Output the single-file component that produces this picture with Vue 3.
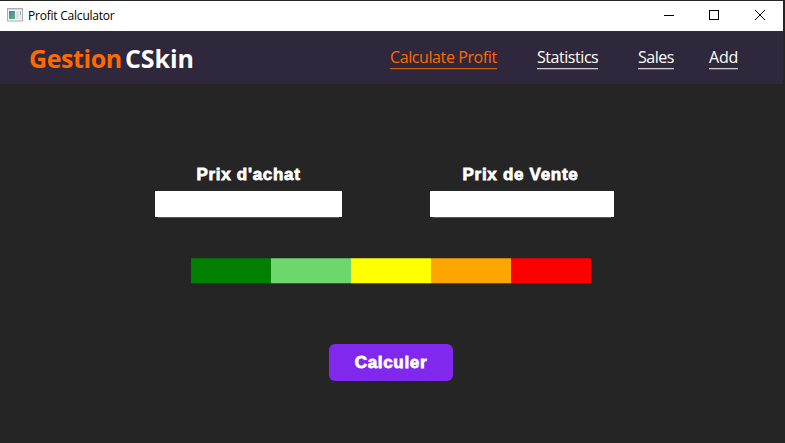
<script setup>
import { ref } from 'vue'

const links = [
  { label: 'Calculate Profit', name: 'profit' },
  { label: 'Statistics', name: 'stats' },
  { label: 'Sales', name: 'sales' },
  { label: 'Add', name: 'add' },
]
const active = ref('profit')
const levels = ['green', 'light', 'yellow', 'orange', 'red']
const buyPrice = ref('')
const sellPrice = ref('')
</script>

<template>
  <div class="window">
    <div class="titlebar">
      <svg class="app-icon" width="16" height="14" viewBox="0 0 16 14">
        <defs>
          <linearGradient id="pane" x1="0" y1="0" x2="1" y2="1">
            <stop offset="0" stop-color="#4580a8" />
            <stop offset="1" stop-color="#5fb878" />
          </linearGradient>
        </defs>
        <rect x="0.5" y="0.5" width="15" height="12.5" fill="#f3f4f5" stroke="#a9afb4" />
        <rect x="1" y="1" width="14" height="1" fill="#d3d8dc" />
        <rect x="2" y="3" width="6" height="8" fill="url(#pane)" />
        <rect x="9" y="3" width="3" height="8" fill="#dedfe3" />
        <rect x="13" y="3" width="1" height="4" fill="#8ab79b" />
        <rect x="13" y="7" width="1" height="4" fill="#d9dce0" />
      </svg>
      <span class="title">Profit Calculator</span>
      <div class="controls">
        <svg class="minimize" width="10" height="10" viewBox="0 0 10 10"><path d="M0 5.5H10" /></svg>
        <svg width="10" height="10" viewBox="0 0 10 10"><rect x="0.5" y="0.5" width="9" height="9" /></svg>
        <svg class="close" width="10" height="10" viewBox="0 0 10 10"><path d="M0 0L10 10M10 0L0 10" /></svg>
      </div>
    </div>

    <header class="header">
      <div class="brand"><span class="accent">Gestion</span><span class="second">CSkin</span></div>
      <nav class="nav">
        <a
          v-for="link in links"
          :key="link.name"
          :class="['link', link.name, { active: active === link.name }]"
          @click="active = link.name"
        >{{ link.label }}</a>
      </nav>
    </header>

    <main class="content">
      <div class="fields">
        <label class="field buy">
          <span class="label">Prix d'achat</span>
          <input v-model="buyPrice" class="input" />
        </label>
        <label class="field sell">
          <span class="label">Prix de Vente</span>
          <input v-model="sellPrice" class="input" />
        </label>
      </div>
      <div class="scale">
        <div v-for="level in levels" :key="level" :class="['level', level]"></div>
      </div>
      <button class="submit">Calculer</button>
    </main>
  </div>
</template>

<style>
body {
  background: #252525;
}
</style>

<style scoped>
.window {
  box-sizing: border-box;
  width: 785px;
  height: 443px;
  padding: 1px 2px 0 0;
  background: #252525;
  overflow: hidden;
}
.titlebar {
  display: flex;
  align-items: center;
  height: 30px;
  padding: 0 18px 0 7px;
  box-sizing: border-box;
  background: #fff;
}
.app-icon {
  margin-top: -2px;
}
.title {
  margin-left: 5px;
  font: 12px/16px "Open Sans", sans-serif;
  letter-spacing: -0.22px;
  color: #000;
}
.controls {
  display: flex;
  gap: 36px;
  margin-left: auto;
  margin-top: -2px;
}
.controls svg {
  display: block;
  fill: none;
  stroke: #000;
  stroke-width: 1;
}
.controls .minimize {
  margin-right: -1px;
}
.header {
  display: flex;
  align-items: flex-start;
  height: 53px;
  background: #2f273b;
  font-family: "Open Sans", "Noto Sans", sans-serif;
}
.brand {
  display: flex;
  width: 361px;
  padding: 10px 0 0 29px;
  font-size: 25px;
  line-height: 34px;
  font-weight: 700;
  color: #fff;
}
.accent {
  width: 96px;
  color: #ff6a00;
  letter-spacing: -0.4px;
}
.second {
  letter-spacing: -0.1px;
}
.nav {
  display: flex;
  padding-top: 15px;
}
.link {
  box-sizing: border-box;
  height: 23px;
  border-bottom: 1px solid #cbc9ce;
  box-shadow: 0 1px #5a5463;
  font-size: 16px;
  line-height: 23px;
  white-space: nowrap;
  color: #fff;
}
.link.active {
  color: #ff6a00;
  border-color: #d15c0c;
  box-shadow: 0 1px #51312f;
}
.profit {
  width: 107px;
  margin-right: 40px;
  letter-spacing: -0.4px;
}
.stats {
  width: 61px;
  margin-right: 40px;
  letter-spacing: -0.45px;
}
.sales {
  width: 36px;
  margin-right: 35px;
  letter-spacing: -0.5px;
}
.add {
  width: 29px;
  letter-spacing: -0.2px;
}
.brand,
.link {
  flex: none;
}
.content {
  display: flex;
  flex-direction: column;
  padding-top: 79px;
}
.fields {
  display: flex;
  gap: 88px;
  padding-left: 155px;
}
.field {
  display: flex;
  flex-direction: column;
}
.buy {
  width: 187px;
}
.sell {
  width: 184px;
}
.label {
  height: 28px;
  font: 700 17px/23px "Liberation Sans", Arial, sans-serif;
  text-align: center;
  color: #fff;
  letter-spacing: 0.7px;
  -webkit-text-stroke: 0.8px #fff;
}
.sell .label {
  padding-right: 3px;
}
.input {
  box-sizing: border-box;
  width: 100%;
  height: 26px;
  padding: 0 6px;
  border: 0;
  border-radius: 0;
  background: #fff;
  box-shadow: 0 4px 0 -3px #595959;
  outline: 0;
}
.scale {
  display: flex;
  width: 400px;
  height: 26px;
  margin: 41px 0 0 191px;
}
.level {
  width: 80px;
  box-shadow: inset 0 1px rgba(37, 37, 37, 0.25), inset 0 -1px rgba(37, 37, 37, 0.7);
}
.green {
  background: #008000;
}
.light {
  background: #6dd66d;
}
.yellow {
  background: #ffff00;
}
.orange {
  background: #ffa500;
}
.red {
  background: #ff0000;
}
.submit {
  width: 124px;
  height: 37px;
  margin: 60px 0 0 329px;
  padding: 0;
  border: 0;
  border-radius: 6px;
  background: #8128ef;
  font: 700 17px/35px "Liberation Sans", Arial, sans-serif;
  letter-spacing: 0.7px;
  color: #fff;
  -webkit-text-stroke: 0.8px #fff;
}
</style>
